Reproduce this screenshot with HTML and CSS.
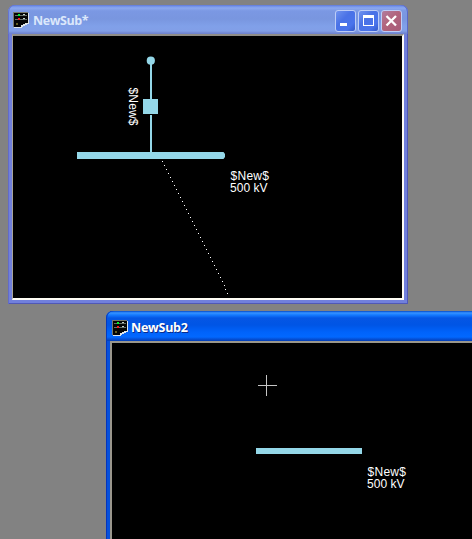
FILE: index.html
```html
<!DOCTYPE html>
<html lang="en">
<head>
<meta charset="utf-8">
<title>Substation editor</title>
<link rel="stylesheet" href="styles.css">
</head>
<body>
<svg class="defs" aria-hidden="true">
  <symbol id="app-icon" viewBox="0 0 16 16" shape-rendering="crispEdges">
    <path d="M1 0H15V11H13V12H11V13H9V15H1Z" fill="#050505"/>
    <path d="M0 0H15V1H1V15H0Z" fill="#77786d"/>
    <path d="M15 1H16V12H14V13H12V14H10V15H9V16H1V15H8V13H10V12H12V11H15Z" fill="#dfe5e8"/>
    <path d="M2 3H14M2 7H14" stroke="#66706b" stroke-width="1"/>
    <path d="M5 2H7V4H5Z" fill="#00f52c"/>
    <path d="M5 6H7V8H5Z" fill="#f31620"/>
    <path d="M10 2H12V3H10ZM10 6H12V7H10Z" fill="#c3cfca"/>
    <path d="M3 11H5V13H3Z" fill="#635d22"/>
  </symbol>
</svg>
<main class="desktop">
  <section class="window inactive">
    <header class="titlebar">
      <svg class="app-icon"><use href="#app-icon"/></svg>
      <h1 class="title">NewSub*</h1>
      <div class="controls">
        <button class="control" aria-label="Minimize"><svg viewBox="0 0 19 20"><path d="M4 12H11V15H4Z" fill="#fff"/></svg></button>
        <button class="control" aria-label="Maximize"><svg viewBox="0 0 19 20"><path d="M4 4H15V15H4ZM5 7V14H14V7Z" fill="#fff" fill-rule="evenodd"/></svg></button>
        <button class="control close" aria-label="Close"><svg viewBox="0 0 19 20"><path d="M4.5 5L14 14.5M14 5L4.5 14.5" stroke="#fff" stroke-width="2.3"/></svg></button>
      </div>
    </header>
    <div class="client">
      <svg class="diagram" viewBox="13 36 389 262" width="389" height="262">
        <g fill="#94d7e8">
          <circle cx="150.8" cy="60.7" r="4.1"/>
          <rect x="150" y="64" width="2" height="35"/>
          <rect x="143" y="99" width="15" height="15"/>
          <rect x="150" y="115" width="2" height="38"/>
          <path d="M77 152H223.5L225 154V157L223.5 159H77Z"/>
        </g>
        <path fill="#fff" d="M162 161h1v1h-1zm2 4h1v1h-1zm2 4h1v1h-1zm2 4h1v1h-1zm2 4h1v1h-1zm2 4h1v1h-1zm2 4h1v1h-1zm2 4h1v1h-1zm2 4h1v1h-1zm2 4h1v1h-1zm2 4h1v1h-1zm2 4h1v1h-1zm2 4h1v1h-1zm2 4h1v1h-1zm2 4h1v1h-1zm2 4h1v1h-1zm2 4h1v1h-1zm2 4h1v1h-1zm2 4h1v1h-1zm2 4h1v1h-1zm2 4h1v1h-1zm2 4h1v1h-1zm2 4h1v1h-1zm2 4h1v1h-1zm2 4h1v1h-1zm2 4h1v1h-1zm2 4h1v1h-1zm2 4h1v1h-1zm2 4h1v1h-1zm2 4h1v1h-1zm2 4h1v1h-1zm2 4h1v1h-1zm1 4h1v1h-1zm2 4h1v1h-1z"/>
        <text class="label" transform="translate(128.5 87.5) rotate(90)" textLength="38">$New$</text>
        <text class="label" x="230.5" y="180" textLength="38.5">$New$</text>
        <text class="label" x="230" y="192" textLength="37.5">500 kV</text>
      </svg>
    </div>
  </section>
  <section class="window active">
    <header class="titlebar">
      <svg class="app-icon"><use href="#app-icon"/></svg>
      <h1 class="title">NewSub2</h1>
    </header>
    <div class="client">
      <svg class="diagram" viewBox="112 343 360 196" width="360" height="196">
        <path d="M258 385.5H277M266.5 375V396" stroke="#c5c5c5"/>
        <rect x="256" y="448" width="106" height="6" fill="#94d7e8"/>
        <text class="label" x="367.5" y="476" textLength="38.5">$New$</text>
        <text class="label" x="367" y="488" textLength="37.5">500 kV</text>
      </svg>
    </div>
  </section>
</main>
</body>
</html>
```
FILE: styles.css
```css
* { box-sizing: border-box; }
body { margin: 0; background: #828282; }
.defs { position: absolute; width: 0; height: 0; }
.desktop {
  position: relative;
  width: 472px;
  height: 539px;
  overflow: hidden;
  background: #828282;
}
.window {
  position: absolute;
  display: flex;
  flex-direction: column;
}
.inactive {
  left: 8px;
  top: 5px;
  width: 400px;
  height: 299px;
  padding: 0 4px 4px;
  border-radius: 7px 7px 0 0;
  background: #7180dc;
  box-shadow: inset 1px 0 #626bc9, inset -1px -1px #5058b6;
}
.active {
  left: 106px;
  top: 311px;
  width: 376px;
  height: 240px;
  padding: 0 4px;
  border-radius: 7px 0 0 0;
  background: #0751dc;
  box-shadow: inset 1px 0 #0535bd;
}
.titlebar {
  display: flex;
  align-items: center;
  flex: none;
  margin: 0 -4px;
  padding: 0 5px;
  border-radius: 7px 7px 0 0;
}
.inactive .titlebar {
  height: 29px;
  background: linear-gradient(#6075d0 0, #6e8ee8 1px, #8ca8ee 3px, #7b98e3 6px, #7996df 14px, #80a0e9 21px, #829fe7 26px, #7288d3 28px, #6e81ce 29px);
  box-shadow: inset 1px 0 #6674ce, inset -1px 0 #5a68c5;
}
.active .titlebar {
  height: 30px;
  background: linear-gradient(#0846bb 0, #1c74ef 1px, #3792ff 2px, #147aff 4px, #0556e4 7px, #0055e5 14px, #0063fb 21px, #0268ff 26px, #0451d8 28px, #033db4 30px);
  box-shadow: inset 1px 0 #0639bd;
}
.app-icon { width: 16px; height: 16px; flex: none; }
.title {
  margin: 2px 0 0 4px;
  font: bold 12.5px/18px "Open Sans", sans-serif;
  white-space: nowrap;
}
.inactive .title { color: #dbe7fb; letter-spacing: -.4px; }
.active .title {
  margin: 3px 0 0 3px;
  color: #fff;
  letter-spacing: -.25px;
  text-shadow: 1px 1px #0a2c8c;
}
.controls { display: flex; gap: 2px; margin: 2px 1px 0 auto; }
.inactive .app-icon { margin-top: 1px; }
.active .app-icon { margin-top: 3px; margin-left: 1px; }
.control {
  width: 21px;
  height: 22px;
  padding: 0;
  border: 1px solid #bdcdf7;
  border-radius: 3px;
  background: linear-gradient(135deg, #7093ef, #4a72e6 40%, #4a74ec 75%, #3358c6);
}
.control svg { display: block; width: 19px; height: 20px; }
.close { background: linear-gradient(135deg, #b17d9f, #b2647d 45%, #a75c78); }
.client { background: #000; }
.inactive .client {
  width: 392px;
  height: 266px;
  border: solid;
  border-width: 2px 2px 2px 1px;
  border-color: #8f8d88 #fffdf5 #fffdf5 #a9a599;
}
.active .client {
  width: 368px;
  height: 210px;
  border: solid #99968c;
  border-width: 2px 0 0 2px;
}
.diagram { display: block; }
.label {
  fill: #fff;
  font: 12px "Liberation Sans", Arial, sans-serif;
}
```
